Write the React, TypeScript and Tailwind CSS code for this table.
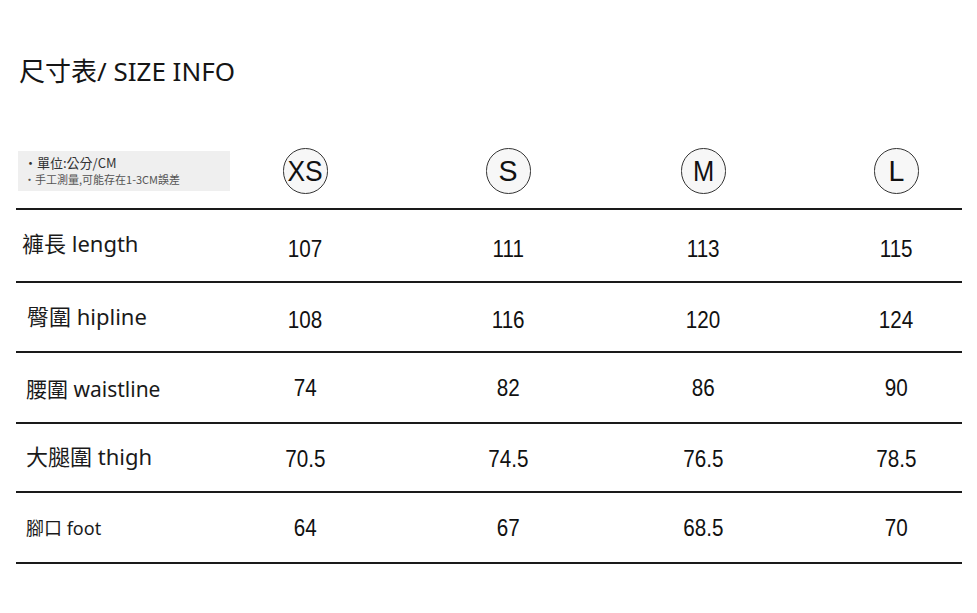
import React from "react";

const sizes = ["XS", "S", "M", "L"];
const colMl = ["", "ml-[103px]", "ml-[95px]", "ml-[93px]"];

type Row = {
  label: string;
  values: string[];
  labelCls: string;
  numCls: string;
  h: string;
};

const rows: Row[] = [
  { label: "褲長 length", values: ["107", "111", "113", "115"], labelCls: "ml-[6px] text-[22px] pb-[5px]", numCls: "pt-[6px]", h: "h-[71px]" },
  { label: "臀圍 hipline", values: ["108", "116", "120", "124"], labelCls: "ml-[11px] text-[22px] pb-[2px]", numCls: "pt-[6px]", h: "h-[68px]" },
  { label: "腰圍 waistline", values: ["74", "82", "86", "90"], labelCls: "ml-[10px] text-[21px] pt-[3px]", numCls: "pt-[1px]", h: "h-[69px]" },
  { label: "大腿圍 thigh", values: ["70.5", "74.5", "76.5", "78.5"], labelCls: "ml-[10px] text-[22px] pb-[3px]", numCls: "pt-[3px]", h: "h-[67px]" },
  { label: "腳口 foot", values: ["64", "67", "68.5", "70"], labelCls: "ml-[10px] text-[18px]", numCls: "", h: "h-[69px]" },
];

export default function App() {
  return (
    <div className="w-[977px] h-[613px] bg-white overflow-hidden text-[#111]">
      <div className="mt-[53px] h-[36px] pl-[19px] text-[26px] leading-[36px] font-['Noto_Sans','Noto_Sans_CJK_TC',sans-serif] text-[#151515]">
        尺寸表/ SIZE INFO
      </div>

      <div className="mt-[59px] ml-[16px] w-[946px]">
        {/* header */}
        <div className="flex items-center h-[46px] box-content pb-[14px] border-b-2 border-[#1a1a1a]">
          <div className="w-[239px] flex items-center">
            <div className="ml-[2px] w-[212px] h-[40px] bg-[#efefef] pl-[6px] pt-[3px] font-['Noto_Sans_CJK_TC',sans-serif]">
              <div className="text-[13px] leading-[18px] text-[#333]">・單位:公分/CM</div>
              <div className="text-[11px] leading-[15px] text-[#555]">・手工測量,可能存在1-3CM誤差</div>
            </div>
          </div>
          {sizes.map((s, i) => (
            <div key={s} className={`w-[100px] flex justify-center ${colMl[i]}`}>
              <div className="w-[45px] h-[46px] rounded-full border border-[#333] bg-[#f7f7f7] flex items-center justify-center">
                <span
                  className={`inline-block font-['Liberation_Sans',Arial,sans-serif] text-[30px] leading-none text-[#111] ${
                    s === "XS" ? "scale-x-[0.88]" : s === "M" ? "scale-x-[0.85]" : "scale-x-[0.95]"
                  }`}
                >
                  {s}
                </span>
              </div>
            </div>
          ))}
        </div>

        {rows.map((r) => (
          <div key={r.label} className={`flex items-center ${r.h} box-content border-b-2 border-[#1a1a1a]`}>
            <div className="w-[239px] flex">
              <span className={`font-['Noto_Sans','Noto_Sans_CJK_TC',sans-serif] leading-none text-[#1a1a1a] ${r.labelCls}`}>
                {r.label}
              </span>
            </div>
            {r.values.map((v, i) => (
              <div key={i} className={`w-[100px] flex justify-center ${colMl[i]} ${r.numCls}`}>
                <span className="inline-block scale-x-[0.86] font-['Liberation_Sans',Arial,sans-serif] text-[24px] leading-none text-[#111]">
                  {v}
                </span>
              </div>
            ))}
          </div>
        ))}
      </div>
    </div>
  );
}
